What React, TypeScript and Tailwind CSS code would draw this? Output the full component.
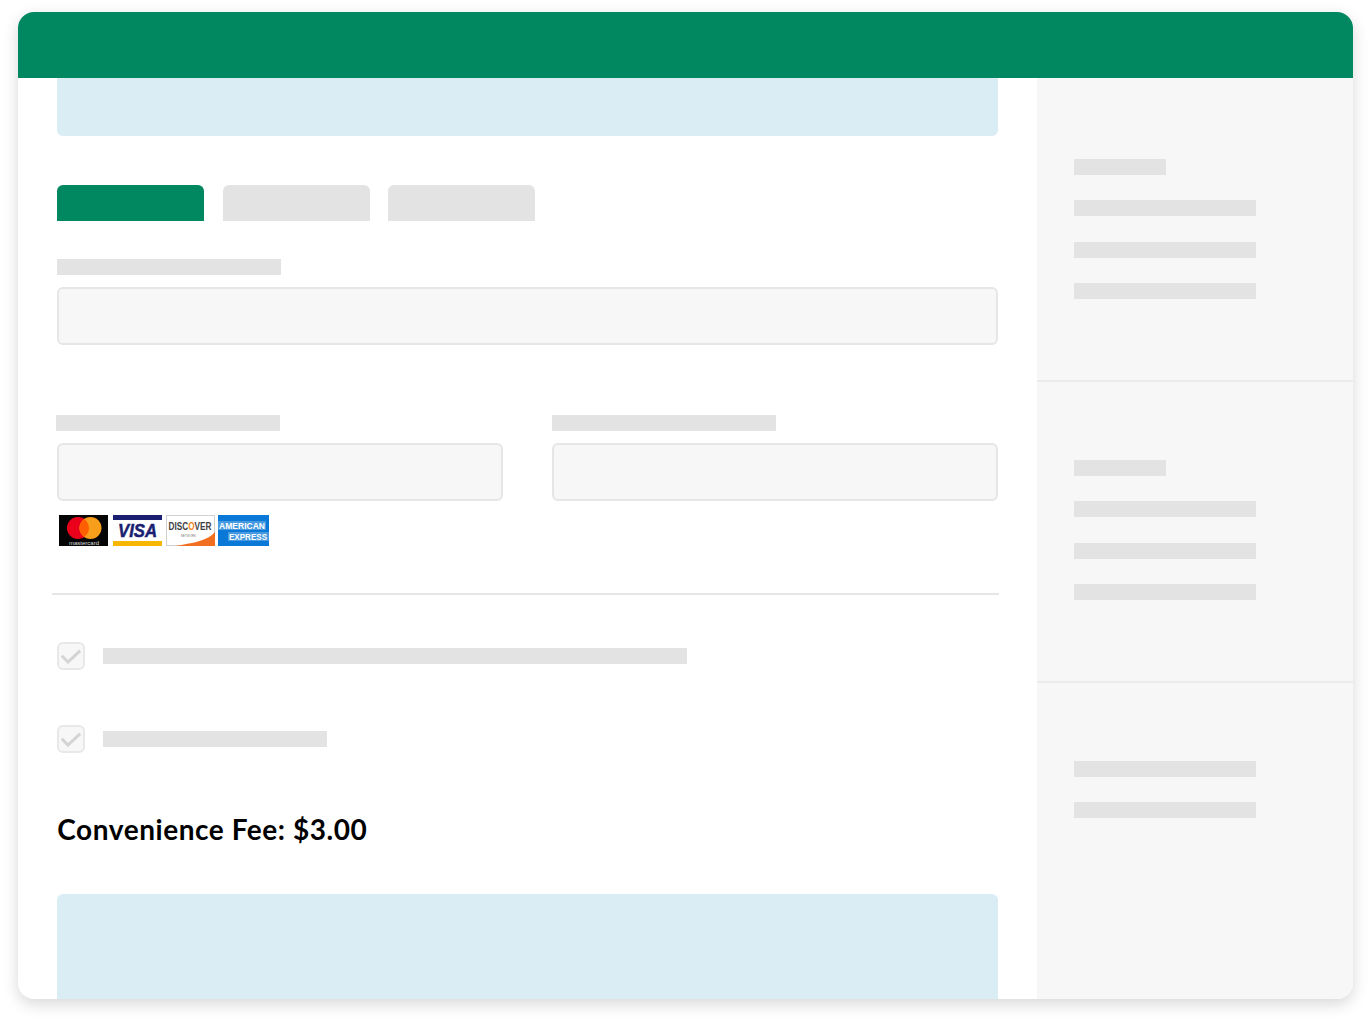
import React from "react";

const Bar = ({ w }: { w: string }) => <div className={`h-4 bg-[#e3e3e3] ${w}`} />;

const Check = () => (
  <div className="flex h-7 w-7 shrink-0 items-center justify-center rounded-[6px] border-2 border-[#e8e8e8] bg-[#f7f7f7]">
    <svg width="20" height="15" viewBox="0 0 20 15" fill="none">
      <path d="M0.8 6.8 L7 13 L19.2 1.6" stroke="#d4d4d4" strokeWidth="3" />
    </svg>
  </div>
);

const Cards = () => (
  <div className="mt-[14px] ml-[2px] flex h-[31px] items-stretch">
    <svg width="49" height="31" viewBox="0 0 49 31" className="mr-[4px]">
      <rect width="49" height="31" fill="#050505" />
      <circle cx="19" cy="13" r="11" fill="#eb001b" />
      <circle cx="31.5" cy="13" r="11" fill="#f79e1b" />
      <path d="M25.25 3.95 a11 11 0 0 1 0 18.1 a11 11 0 0 1 0 -18.1" fill="#ff5f00" />
      <text x="25" y="29.5" textAnchor="middle" fontSize="6" fill="#dddddd" fontFamily="Liberation Sans, sans-serif">mastercard</text>
    </svg>
    <svg width="50" height="31" viewBox="0 0 50 31" className="mr-[4px]">
      <rect width="50" height="31" fill="#ffffff" />
      <rect x="1" y="0" width="49" height="5" fill="#1a1f71" />
      <rect x="1" y="26" width="49" height="5" fill="#f7b600" />
      <text x="6" y="22" fontSize="18" fontWeight="700" fontStyle="italic" textLength="39" lengthAdjust="spacingAndGlyphs" fill="#1a1f71" stroke="#1a1f71" strokeWidth="0.5" fontFamily="Liberation Sans, sans-serif">VISA</text>
    </svg>
    <svg width="49" height="31" viewBox="0 0 49 31" className="mr-[3px]">
      <rect x="0.5" y="0.5" width="48" height="30" fill="#ffffff" stroke="#d0d0d0" />
      <path d="M9 31 C26 28 42 26 49 17 L49 31 Z" fill="#f26e21" />
      <text x="2.5" y="15" fontSize="10" fontWeight="700" textLength="43" lengthAdjust="spacingAndGlyphs" fill="#3f3f3f" fontFamily="Liberation Sans, sans-serif">
        DISC<tspan fill="#f58220">O</tspan>VER
      </text>
      <text x="15" y="22" fontSize="3" textLength="15" lengthAdjust="spacingAndGlyphs" fill="#777777" fontFamily="Liberation Sans, sans-serif">NETWORK</text>
    </svg>
    <svg width="51" height="31" viewBox="0 0 51 31">
      <rect width="51" height="31" fill="#0a78d6" />
      <rect x="0" y="6" width="48" height="9" fill="#ffffff" fillOpacity="0.25" />
      <rect x="10" y="17" width="41" height="9" fill="#ffffff" fillOpacity="0.25" />
      <text x="1" y="14" fontSize="8.5" fontWeight="700" textLength="46" lengthAdjust="spacingAndGlyphs" fill="#ffffff" fontFamily="Liberation Sans, sans-serif">AMERICAN</text>
      <text x="11" y="25" fontSize="8.5" fontWeight="700" textLength="38" lengthAdjust="spacingAndGlyphs" fill="#ffffff" fontFamily="Liberation Sans, sans-serif">EXPRESS</text>
    </svg>
  </div>
);

const Input = () => <div className="mt-3 h-[58px] rounded-[6px] border-2 border-[#e6e6e6] bg-[#f7f7f7]" />;

export default function App() {
  return (
    <div className="h-[1024px] w-[1370px] bg-white pt-3 pl-[18px]">
      <div className="flex h-[987px] w-[1335px] flex-col overflow-hidden rounded-[16px] bg-white shadow-[0_5px_16px_rgba(0,0,0,0.16)]">
        <div className="h-[66px] shrink-0 bg-[#028861]" />
        <div className="flex min-h-0 flex-1">
          <div className="flex w-[1019px] shrink-0 flex-col pr-[39px] pl-[39.33px]">
            <div className="h-[58px] shrink-0 rounded-b-[6px] bg-[#daedf5]" />
            <div className="mt-[49px] flex gap-[18.67px]">
              <div className="h-9 w-[146.67px] rounded-t-[6px] bg-[#028861]" />
              <div className="h-9 w-[147px] rounded-t-[6px] bg-[#e3e3e3]" />
              <div className="h-9 w-[146.67px] rounded-t-[6px] bg-[#e3e3e3]" />
            </div>
            <div className="mt-[38px] w-[224px]"><Bar w="w-full" /></div>
            <Input />
            <div className="mt-[70px] grid grid-cols-[446px_446px] gap-x-[49px]">
              <div>
                <div className="-ml-px"><Bar w="w-[224px]" /></div>
                <Input />
                <Cards />
              </div>
              <div>
                <Bar w="w-[224px]" />
                <Input />
              </div>
            </div>
            <div className="mt-[47px] -ml-[5px] h-0.5 w-[947px] shrink-0 bg-[#e6e6e6]" />
            <div className="mt-[47px] flex items-center gap-[18px]">
              <Check />
              <Bar w="w-[584px]" />
            </div>
            <div className="mt-[55px] flex items-center gap-[18px]">
              <Check />
              <Bar w="w-[224px]" />
            </div>
            <div className="mt-[58px] font-['Lato',sans-serif] text-[28px] leading-[36px] font-bold tracking-[0.55px] text-black">Convenience Fee: $3.00</div>
            <div className="mt-[47px] min-h-0 flex-1 rounded-t-[6px] bg-[#daedf5]" />
          </div>
          <div className="flex min-w-0 flex-1 flex-col bg-[#f7f7f7]">
            <div className="flex h-[304px] shrink-0 flex-col gap-[25.33px] border-b-2 border-[#ebebeb] pt-[81px] pl-[37px]">
              <Bar w="w-[92px]" />
              <Bar w="w-[182px]" />
              <Bar w="w-[182px]" />
              <Bar w="w-[182px]" />
            </div>
            <div className="flex h-[301px] shrink-0 flex-col gap-[25.33px] border-b-2 border-[#ebebeb] pt-[78px] pl-[37px]">
              <Bar w="w-[92px]" />
              <Bar w="w-[182px]" />
              <Bar w="w-[182px]" />
              <Bar w="w-[182px]" />
            </div>
            <div className="flex flex-col gap-[25.33px] pt-[78px] pl-[37px]">
              <Bar w="w-[182px]" />
              <Bar w="w-[182px]" />
            </div>
          </div>
        </div>
      </div>
    </div>
  );
}
